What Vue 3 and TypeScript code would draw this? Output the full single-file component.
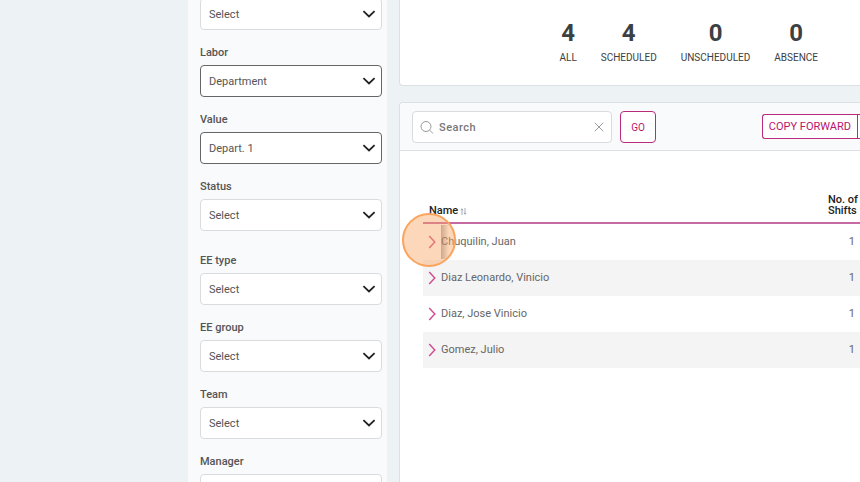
<script setup lang="ts">
import { ref } from 'vue'

interface Field {
  id: string
  label: string
  value: string
  active?: boolean
  groupEnd?: boolean
}

interface Employee {
  name: string
  shifts: number
}

const fields = ref<Field[]>([
  { id: 'location', label: '', value: 'Select' },
  { id: 'labor', label: 'Labor', value: 'Department', active: true },
  { id: 'value', label: 'Value', value: 'Depart. 1', active: true },
  { id: 'status', label: 'Status', value: 'Select', groupEnd: true },
  { id: 'ee-type', label: 'EE type', value: 'Select' },
  { id: 'ee-group', label: 'EE group', value: 'Select' },
  { id: 'team', label: 'Team', value: 'Select' },
  { id: 'manager', label: 'Manager', value: 'Select' },
])

const stats = [
  { label: 'ALL', count: 4 },
  { label: 'SCHEDULED', count: 4 },
  { label: 'UNSCHEDULED', count: 0 },
  { label: 'ABSENCE', count: 0 },
]

const employees: Employee[] = [
  { name: 'Chuquilin, Juan', shifts: 1 },
  { name: 'Diaz Leonardo, Vinicio', shifts: 1 },
  { name: 'Diaz, Jose Vinicio', shifts: 1 },
  { name: 'Gomez, Julio', shifts: 1 },
]

const query = ref('')
</script>

<template>
  <div class="shell">
    <aside class="filters">
      <div
        v-for="field in fields"
        :key="field.id"
        class="field"
        :class="{ active: field.active, 'group-end': field.groupEnd }"
      >
        <label v-if="field.label" :for="field.id">{{ field.label }}</label>
        <div class="select-box">
          <select :id="field.id" :aria-label="field.label || 'Filter'">
            <option>{{ field.value }}</option>
          </select>
          <svg class="caret" viewBox="0 0 14 8" aria-hidden="true">
            <path d="M1.4 1.2 7 6.5l5.600-5.300" />
          </svg>
        </div>
      </div>
    </aside>

    <main class="content">
      <section class="card summary">
        <div v-for="stat in stats" :key="stat.label" class="stat">
          <strong>{{ stat.count }}</strong>
          <span>{{ stat.label }}</span>
        </div>
      </section>

      <section class="card schedule">
        <div class="toolbar">
          <div class="search">
            <svg class="lens" viewBox="0 0 14 14" aria-hidden="true">
              <circle cx="6" cy="6.500" r="5" />
              <path d="m9.700 10.200 3.300 3.300" />
            </svg>
            <input v-model="query" type="text" placeholder="Search" aria-label="Search" />
            <button class="clear" type="button" aria-label="Clear search" @click="query = ''">
              <svg viewBox="0 0 10 10" aria-hidden="true">
                <path d="m.7.7 8.600 8.600M9.300.7.7 9.300" />
              </svg>
            </button>
          </div>
          <button class="go" type="button">GO</button>
          <div class="actions">
            <button class="copy" type="button">COPY FORWARD</button>
            <button class="more" type="button" aria-label="More actions"></button>
          </div>
        </div>

        <table>
          <thead>
            <tr>
              <th class="name-head" scope="col">
                Name
                <svg class="sort" viewBox="0 0 7 7" aria-hidden="true">
                  <path d="M2 7V.8M.6 2.200 2 .8l1.200 1.400M5 0v6.200M3.900 4.800 5 6.200l1.400-1.400" />
                </svg>
              </th>
              <th class="shift-head" scope="col">No. of<br />Shifts</th>
            </tr>
          </thead>
          <tbody>
            <tr v-for="(employee, index) in employees" :key="employee.name">
              <td>
                <div class="person">
                  <button class="expand" type="button" :aria-label="`Expand ${employee.name}`">
                    <svg viewBox="0 0 8 14" aria-hidden="true">
                      <path d="m1.200 1 5.600 6-5.600 6" />
                    </svg>
                  </button>
                  <span>{{ employee.name }}</span>
                  <i v-if="index === 0" class="edge-shadow"></i>
                  <i v-if="index === 0" class="pointer"></i>
                </div>
              </td>
              <td class="shifts">{{ employee.shifts }}</td>
            </tr>
          </tbody>
        </table>
      </section>
    </main>
  </div>
</template>

<style>
body {
  background: #edf2f5;
}
</style>

<style scoped>
.shell {
  display: flex;
  gap: 12px;
  height: 100vh;
  padding-left: 188px;
  overflow: hidden;
  box-sizing: border-box;
  background: #edf2f5;
  color: #555;
  font-family: Roboto, 'Liberation Sans', sans-serif;
  font-size: 11px;
}

.shell * {
  box-sizing: border-box;
}

button,
input,
select {
  margin: 0;
  padding: 0;
  font: inherit;
  color: inherit;
}

button {
  cursor: pointer;
}

svg {
  fill: none;
  stroke: currentColor;
}

.filters {
  display: flex;
  flex: 0 0 199px;
  flex-direction: column;
  gap: 13px;
  padding: 0 5px 0 12px;
  background: #f9fafc;
}

.field {
  display: flex;
  flex: none;
  flex-direction: column;
  gap: 2px;
}

.field:first-child {
  margin-top: -2px;
}

.group-end {
  margin-bottom: 7px;
}

.field label {
  font-weight: 500;
  line-height: 20px;
}

.select-box {
  display: grid;
  align-items: center;
}

.select-box > * {
  grid-area: 1 / 1;
}

.select-box select {
  width: 100%;
  height: 32px;
  padding: 0 28px 0 8px;
  border: 1px solid #d9dbdf;
  border-radius: 4px;
  background: #fff;
  appearance: none;
}

.active select {
  border-color: #666;
}

.caret {
  justify-self: end;
  width: 14px;
  height: 8px;
  margin-right: 6px;
  color: #222;
  stroke-width: 1.8;
  pointer-events: none;
}

.content {
  display: flex;
  flex: 1;
  flex-direction: column;
  gap: 16px;
  min-width: 0;
}

.card {
  border: 1px solid #dcdfe3;
  border-right: 0;
  background: #fff;
}

.summary {
  display: flex;
  justify-content: flex-end;
  gap: 24px;
  padding: 18px 42px 17px 0;
  border-top: 0;
  border-bottom-left-radius: 4px;
}

.stat {
  display: flex;
  flex-direction: column;
  align-items: center;
  color: #3c4043;
}

.stat strong {
  font-size: 24px;
  font-weight: 700;
  line-height: 30px;
}

.stat span {
  font-size: 10px;
  line-height: 20px;
}

.schedule {
  flex: 1;
  border-bottom: 0;
  border-top-left-radius: 4px;
}

.toolbar {
  display: flex;
  align-items: center;
  gap: 8px;
  height: 48px;
  padding: 1px 0 0 12px;
  border-bottom: 1px solid #dcdfe3;
  border-top-left-radius: 4px;
  background: #f9fafc;
}

.search {
  display: flex;
  align-items: center;
  width: 200px;
  height: 32px;
  padding: 0 7px;
  border: 1px solid #d9dbdf;
  border-radius: 4px;
  background: #fff;
}

.lens {
  flex: none;
  width: 14px;
  height: 14px;
  color: #999;
}

.search input {
  flex: 1;
  min-width: 0;
  padding-left: 5px;
  border: 0;
  outline: 0;
  background: none;
  font-weight: 500;
  letter-spacing: 0.5px;
}

.search input::placeholder {
  color: #777;
  opacity: 1;
}

.clear {
  display: flex;
  border: 0;
  background: none;
  color: #999;
}

.clear svg {
  width: 10px;
  height: 10px;
}

.go,
.copy,
.more {
  border: 1px solid #b82a7a;
  background: #fff;
  color: #b9146c;
}

.go {
  width: 36px;
  height: 32px;
  border-radius: 4px;
  font-size: 10px;
}

.actions {
  display: flex;
  height: 25px;
  margin: 0 0 2px auto;
}

.copy {
  padding: 0 6px;
  border-right: 0;
  border-radius: 3px 0 0 3px;
  white-space: nowrap;
}

.more {
  width: 3px;
  border-right: 0;
}

table {
  width: calc(100% - 23px);
  margin: 32px 0 0 23px;
  border-collapse: separate;
  border-spacing: 0;
}

th {
  height: 41px;
  padding: 0 0 6px;
  border-bottom: 2px solid #c66aa3;
  color: #222;
  font-weight: 500;
  line-height: 11px;
  text-align: left;
  vertical-align: bottom;
}

.name-head {
  padding-left: 6px;
}

.sort {
  width: 7px;
  height: 7px;
  margin-left: -1px;
  color: #8e95ab;
  stroke-width: 0.8;
  vertical-align: -1px;
}

.shift-head {
  width: 32px;
  white-space: nowrap;
}

td {
  height: 36px;
  padding: 0;
  color: #666;
}

tbody tr:nth-child(even) {
  background: #f4f4f4;
}

.person {
  position: relative;
  display: flex;
  align-items: center;
  gap: 5px;
  height: 36px;
  padding-left: 5px;
}

.person span {
  line-height: 16px;
  margin-bottom: 1px;
}

.expand {
  display: flex;
  border: 0;
  background: none;
  color: #d04a8c;
}

.expand svg {
  width: 8px;
  height: 14px;
  stroke-width: 1.4;
}

.shifts {
  padding: 0 5px 2px 0;
  text-align: right;
}

.edge-shadow {
  position: absolute;
  top: 1px;
  left: 18px;
  width: 8px;
  height: 34px;
  background: linear-gradient(90deg, rgba(70, 70, 80, 0.45), rgba(70, 70, 80, 0));
}

.pointer {
  position: absolute;
  top: -11px;
  left: -21px;
  width: 54px;
  height: 54px;
  border: 2px solid #f9a45f;
  border-radius: 50%;
  background: rgba(251, 164, 96, 0.44);
  pointer-events: none;
}
</style>
